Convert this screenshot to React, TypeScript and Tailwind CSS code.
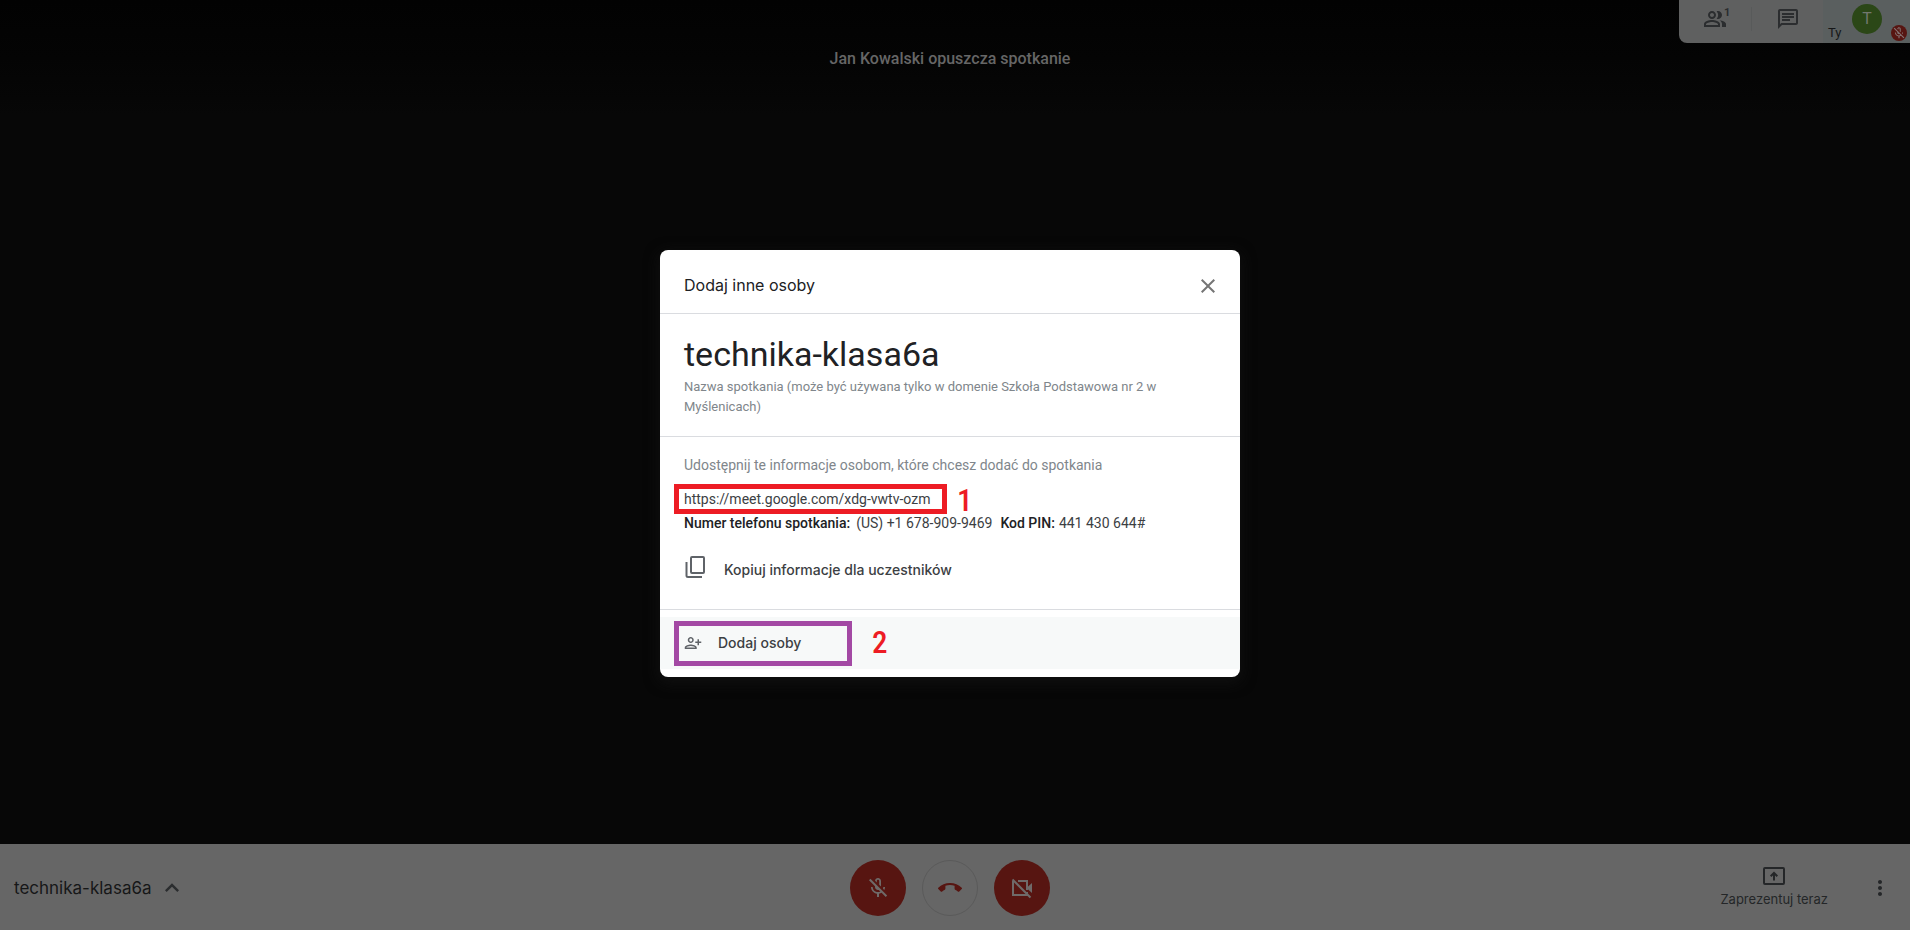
import type { ReactNode } from "react";
import {
  MdCallEnd,
  MdClose,
  MdExpandLess,
  MdMoreVert,
  MdOutlineChat,
  MdOutlineMicOff,
  MdOutlinePeopleAlt,
} from "react-icons/md";

function PersonAddIcon() {
  return (
    <svg viewBox="0 0 24 24" className="size-[18px] fill-[#5f6368]" aria-hidden="true">
      <path d="M13 8c0-2.21-1.79-4-4-4S5 5.79 5 8s1.79 4 4 4 4-1.79 4-4zm-2 0c0 1.1-.9 2-2 2s-2-.9-2-2 .9-2 2-2 2 .9 2 2zM1 18v2h16v-2c0-2.66-5.33-4-8-4s-8 1.34-8 4zm2 0c.2-.71 3.3-2 6-2 2.69 0 5.78 1.28 6 2H3zm17-3v-3h3v-2h-3V7h-2v3h-3v2h3v3h2z" />
    </svg>
  );
}

function CopyIcon() {
  return (
    <svg viewBox="0 0 24 24" className="size-6 fill-none stroke-[#5f6368] stroke-2" aria-hidden="true">
      <rect x="7" y="2" width="13" height="16" rx="1" />
      <path d="M2.5 7v13.500q0 1.500 1.500 1.500H18" />
    </svg>
  );
}

function PresentIcon() {
  return (
    <svg viewBox="0 0 24 24" className="size-6 fill-none stroke-current stroke-2" aria-hidden="true">
      <rect x="2" y="4" width="20" height="16" rx="1" />
      <path d="M12 16.500V9M8.700 12.300 12 9l3.300 3.300" />
    </svg>
  );
}

function CameraOffIcon() {
  return (
    <svg viewBox="0 0 24 24" className="size-6 fill-none stroke-current stroke-2" aria-hidden="true">
      <path d="M8 5h9v9M3 5v14h14v-3" />
      <path d="M17 11.500 22 7v10l-5-4.500z" className="fill-current stroke-none" />
      <path d="M2.500 3.500 20.500 21.500" />
    </svg>
  );
}

function Toolbar() {
  return (
    <div className="flex h-[43px] rounded-bl-lg bg-[#5f6060] text-[#2b2d2f]">
      <button aria-label="Uczestnicy" className="relative flex w-[72px] justify-center pt-[7px]">
        <MdOutlinePeopleAlt className="size-6" />
        <span className="absolute top-[6px] left-[45px] text-[11px] leading-[14px] font-bold">1</span>
      </button>
      <div className="mt-[7px] h-6 w-px bg-[#585a5a]" />
      <button aria-label="Czat" className="flex w-[71px] justify-center pt-[7px]">
        <MdOutlineChat className="size-6" />
      </button>
      <div className="flex w-[87px] bg-[#5a5f5f] pl-[5px]">
        <span className="mt-6 w-6 text-[13px] leading-[18px] text-[#161718]">Ty</span>
        <span className="mt-1 flex size-[30px] items-center justify-center rounded-full bg-[#2b4717] text-[16px] leading-5 text-[#73786f]">
          T
        </span>
        <span className="mt-[25px] ml-[9px] flex size-4 items-center justify-center rounded-full bg-[#571511] text-[#837373]">
          <MdOutlineMicOff className="size-3.5" />
        </span>
      </div>
    </div>
  );
}

function RoundButton({ label, className, children }: { label: string; className: string; children: ReactNode }) {
  return (
    <button aria-label={label} className={`flex size-14 items-center justify-center rounded-full ${className}`}>
      {children}
    </button>
  );
}

function CallBar() {
  return (
    <footer className="grid h-[86px] grid-cols-[1fr_auto_1fr] items-center bg-[#666666] pt-0.5 pr-2.5 font-[Inter,sans-serif] text-[#242628]">
      <button className="flex items-center gap-1.5 justify-self-start pl-3.5 text-[17px] leading-6 text-[#161718]">
        technika-klasa6a
        <MdExpandLess className="size-7 text-[#2b2d2f]" />
      </button>
      <div className="flex gap-4">
        <RoundButton label="Włącz mikrofon" className="bg-[#571511] text-[#6f6a69]">
          <MdOutlineMicOff className="size-6" />
        </RoundButton>
        <RoundButton label="Zakończ rozmowę" className="border border-[#5a5a5a] text-[#571511]">
          <MdCallEnd className="size-6" />
        </RoundButton>
        <RoundButton label="Włącz kamerę" className="bg-[#571511] text-[#6f6a69]">
          <CameraOffIcon />
        </RoundButton>
      </div>
      <div className="-mr-2.5 flex items-center gap-10 justify-self-end pr-[18px]">
        <button className="flex flex-col items-center gap-0.5 pb-1 text-[13px] leading-[18px]">
          <PresentIcon />
          Zaprezentuj teraz
        </button>
        <button aria-label="Więcej opcji">
          <MdMoreVert className="size-6" />
        </button>
      </div>
    </footer>
  );
}

const digit = "font-['Liberation_Sans_Narrow','Roboto_Condensed',Roboto,sans-serif] text-[31px] leading-6 font-medium text-[#ed1c24]";

function Dialog() {
  return (
    <section
      role="dialog"
      aria-labelledby="dialog-title"
      className="w-[580px] overflow-hidden rounded-lg bg-white text-[14px] text-[#202124] shadow-[0_4px_14px_2px_#101010]"
    >
      <header className="flex items-center justify-between border-b border-[#dadce0] pt-6 pr-5 pb-[15px] pl-6">
        <h2 id="dialog-title" className="pb-0.5 font-[Inter,sans-serif] text-[16px] leading-[22px]">
          Dodaj inne osoby
        </h2>
        <button aria-label="Zamknij">
          <MdClose className="size-6 text-[#757575]" />
        </button>
      </header>

      <div className="border-b border-[#dadce0] px-6 pt-[19px] pb-[19px]">
        <h1 className="mb-0.5 text-[34px] leading-[42px]">technika-klasa6a</h1>
        <p className="text-[13px] leading-5 text-[#80868b]">
          Nazwa spotkania (może być używana tylko w domenie Szkoła Podstawowa nr 2 w Myślenicach)
        </p>
      </div>

      <div className="border-b border-[#dadce0] px-6 pt-[18px] pb-7">
        <p className="mb-3 leading-5 text-[#80868b]">
          Udostępnij te informacje osobom, które chcesz dodać do spotkania
        </p>
        <div className="relative h-6 leading-6">
          <a href="https://meet.google.com/xdg-vwtv-ozm" className="text-[#3c4043]">
            https://meet.google.com/xdg-vwtv-ozm
          </a>
          <div className="absolute -top-[3px] -left-2.5 h-[30px] w-[273px] border-5 border-[#ed1c24]" />
          <span className={`absolute top-0.5 left-[273px] ${digit}`}>1</span>
        </div>
        <p className="flex leading-6 text-[#3c4043]">
          <strong className="mr-1.5 font-medium text-[#202124]">Numer telefonu spotkania:</strong>
          <span className="mr-2">(US) +1 678-909-9469</span>
          <strong className="mr-1 font-medium text-[#202124]">Kod PIN:</strong>
          <span>441 430 644#</span>
        </p>
        <button className="mt-5 flex items-start gap-4 font-[Inter,sans-serif] leading-[22px] font-medium text-[#3c4043]">
          <CopyIcon />
          <span className="pt-1">Kopiuj informacje dla uczestników</span>
        </button>
      </div>

      <div className="pt-[7px] pb-2">
        <div className="relative bg-[#f7f9f9]">
          <button className="flex h-[52px] w-full items-center gap-4 px-6 font-[Inter,sans-serif] font-medium text-[#3c4043]">
            <PersonAddIcon />
            <span className="pb-0.5">Dodaj osoby</span>
          </button>
          <div className="absolute top-1 left-3.5 h-[45px] w-[178px] border-5 border-[#a349a4]" />
          <span className={`absolute top-3.5 left-[212px] ${digit}`}>2</span>
        </div>
      </div>
    </section>
  );
}

export default function App() {
  return (
    <div className="min-h-screen bg-white pr-2.5 font-[Roboto,sans-serif]">
      <div className="relative flex min-h-screen flex-col bg-[#070707]">
        <main className="relative flex-1 bg-linear-to-b from-[#020202] to-[#070707] to-[115px] pr-2.5">
          <p className="pt-[49px] text-center text-[16px] leading-5 font-medium text-[#666666]">
            Jan Kowalski opuszcza spotkanie
          </p>
          <div className="absolute top-0 right-0">
            <Toolbar />
          </div>
        </main>
        <CallBar />
        <div className="absolute inset-0 flex items-center justify-center pr-2.5 pb-[3px]">
          <Dialog />
        </div>
      </div>
    </div>
  );
}
